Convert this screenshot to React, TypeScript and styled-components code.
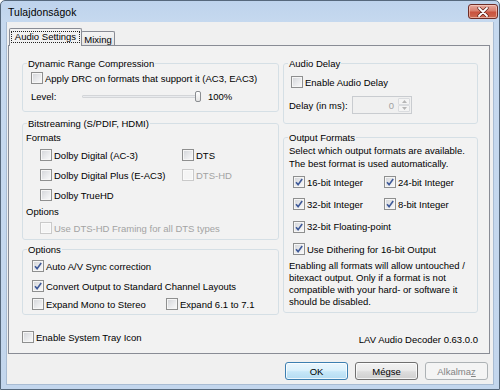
import React from "react";
import styled, { createGlobalStyle } from "styled-components";

const Global = createGlobalStyle`
  html, body { margin: 0; padding: 0; background: #ffffff; }
  body {
    width: 500px; height: 390px; overflow: hidden;
    font-family: "Liberation Sans", Arial, sans-serif;
    font-size: 9.5px; color: #000;
  }
  * { box-sizing: border-box; }
`;

const Window = styled.div`
  width: 500px;
  height: 390px;
  border: 1px solid #56687c;
  border-radius: 5px 5px 0 0;
  background: linear-gradient(#bed3ec 0px, #c6d9ef 22px, #c3d6ed 100%);
  display: flex;
  flex-direction: column;
  overflow: hidden;
`;

const TitleBar = styled.div`
  height: 21px;
  flex: none;
  display: flex;
  align-items: flex-start;
  padding-left: 7px;
`;

const TitleText = styled.div`
  font-size: 10.4px;
  line-height: 12px;
  margin-top: 6px;
  color: #000;
  letter-spacing: 0.1px;
`;

const CloseButton = styled.div`
  margin-left: auto;
  margin-right: 1px;
  margin-top: 3px;
  width: 30px;
  height: 15px;
  border: 1px solid #6e2d27;
  border-radius: 3px;
  background: linear-gradient(#e6a99e 0%, #d8806f 45%, #c9523e 55%, #cd6a52 100%);
  box-shadow: inset 0 0 0 1px rgba(255, 220, 210, 0.55);
  display: flex;
  align-items: center;
  justify-content: center;
`;

const Client = styled.div`
  flex: 1;
  margin: 0 5px 4px 5px;
  background: #f0f0f0;
  border: 1px solid #a9bcd3;
  border-top: none;
  display: flex;
  flex-direction: column;
  padding: 6px 3px 0 1px;
`;

const TabStrip = styled.div`
  display: flex;
  align-items: flex-end;
  height: 17px;
  padding-left: 1px;
  flex: none;
`;

const TabSelected = styled.div`
  width: 73px;
  height: 18px;
  margin-bottom: -1px;
  position: relative;
  z-index: 1;
  border: 1px solid #898c95;
  border-bottom: none;
  border-radius: 2px 2px 0 0;
  background: #f2f2f2;
  padding: 2px 1px 0 1px;
`;

const FocusLabel = styled.div`
  height: 12px;
  border: 1px dotted #222;
  display: flex;
  align-items: center;
  justify-content: center;
  line-height: 10px;
`;

const Tab = styled.div`
  width: 34px;
  height: 14px;
  margin-left: -1px;
  border: 1px solid #898c95;
  border-bottom: none;
  border-radius: 2px 2px 0 0;
  background: linear-gradient(#f4f4f4, #e4e4e4);
  display: flex;
  align-items: center;
  justify-content: center;
  padding-top: 1px;
`;

const Panel = styled.div`
  height: 309px;
  flex: none;
  border: 1px solid #898c95;
  background: #f2f2f2;
  padding: 11px 11px 0 13px;
  display: grid;
  grid-template-columns: 257px 195px;
  column-gap: 4px;
  align-items: start;
`;

const Column = styled.div`
  display: flex;
  flex-direction: column;
`;

const Group = styled.fieldset<{ $mt?: number; $pb?: number }>`
  margin: ${(p) => p.$mt ?? 0}px 0 0 0;
  padding: 0 0 ${(p) => p.$pb ?? 0}px 0;
  border: 1px solid #d5dfe5;
  border-radius: 3px;
  min-width: 0;
`;

const Legend = styled.legend`
  margin-left: 4px;
  padding: 0 1px;
  line-height: 13px;
  height: 13px;
`;

const Row = styled.div<{ $h: number; $indent?: number; $mt?: number; $end?: boolean }>`
  display: flex;
  align-items: center;
  height: ${(p) => p.$h}px;
  padding-left: ${(p) => p.$indent ?? 0}px;
  margin-top: ${(p) => p.$mt ?? 0}px;
  justify-content: ${(p) => (p.$end ? "flex-end" : "flex-start")};
  white-space: nowrap;
`;

const Cell = styled.div<{ $w?: number }>`
  display: flex;
  align-items: center;
  flex: ${(p) => (p.$w ? "none" : "1")};
  width: ${(p) => (p.$w ? `${p.$w}px` : "auto")};
`;

const Para = styled.div<{ $lh: number; $indent: number; $pb?: number }>`
  line-height: ${(p) => p.$lh}px;
  padding-left: ${(p) => p.$indent}px;
  padding-bottom: ${(p) => p.$pb ?? 0}px;
  white-space: nowrap;
`;

const Box = styled.span<{ $disabled?: boolean }>`
  flex: none;
  width: 12px;
  height: 12px;
  border: 1px solid ${(p) => (p.$disabled ? "#cacaca" : "#8e8f8f")};
  background: ${(p) =>
    p.$disabled
      ? "#f5f5f5"
      : "linear-gradient(135deg, #d2d4d8 0%, #e9eaec 55%, #fbfbfb 100%)"};
  box-shadow: inset 0 0 0 1px ${(p) => (p.$disabled ? "#fafafa" : "#f6f6f6")};
  display: flex;
  align-items: center;
  justify-content: center;
`;

const CheckLabel = styled.span<{ $disabled?: boolean }>`
  margin-left: 2px;
  color: ${(p) => (p.$disabled ? "#a3a3a3" : "#000")};
`;

const Text = styled.span<{ $disabled?: boolean; $ml?: number }>`
  color: ${(p) => (p.$disabled ? "#a3a3a3" : "#000")};
  margin-left: ${(p) => p.$ml ?? 0}px;
`;

const Slider = styled.div`
  width: 119px;
  height: 12px;
  display: flex;
  align-items: center;
  flex: none;
`;

const Track = styled.div`
  flex: 1;
  height: 3px;
  border: 1px solid #d3d5d8;
  border-radius: 1px;
  background: #e9ebee;
`;

const Thumb = styled.div`
  width: 6px;
  height: 11px;
  margin-left: -2px;
  border: 1px solid #8a8d91;
  border-radius: 2px;
  background: linear-gradient(#ffffff, #e4e4e4);
`;

const SpinBox = styled.div`
  width: 60px;
  height: 18px;
  border: 1px solid #c9ccd0;
  background: #f0f0f0;
  display: flex;
  flex: none;
`;

const SpinValue = styled.div`
  flex: 1;
  display: flex;
  align-items: center;
  justify-content: flex-end;
  padding-right: 4px;
  color: #a0a0a0;
`;

const SpinButtons = styled.div`
  width: 13px;
  display: flex;
  flex-direction: column;
  padding: 1px 1px 1px 0;
`;

const SpinHalf = styled.div`
  flex: 1;
  border: 1px solid #dadcdf;
  border-radius: 1px;
  background: #f4f4f4;
  display: flex;
  align-items: center;
  justify-content: center;
`;

const ButtonRow = styled.div`
  display: flex;
  justify-content: flex-end;
  gap: 7px;
  margin-top: 8px;
  padding-right: 2px;
`;

const Button = styled.div<{ $variant: "default" | "normal" | "disabled" }>`
  width: 63px;
  height: 18px;
  border-radius: 3px;
  display: flex;
  align-items: center;
  justify-content: center;
  border: 1px solid
    ${(p) =>
      p.$variant === "default" ? "#3c7fb1" : p.$variant === "normal" ? "#707070" : "#adb2b5"};
  color: ${(p) => (p.$variant === "disabled" ? "#838383" : "#000")};
  background: ${(p) =>
    p.$variant === "default"
      ? "linear-gradient(#eaf6fd 0%, #dcf1fc 45%, #c6e7f8 55%, #b4dcf2 100%)"
      : p.$variant === "normal"
      ? "linear-gradient(#f2f2f2 0%, #ebebeb 45%, #dddddd 55%, #cfcfcf 100%)"
      : "#f4f4f4"};
  box-shadow: inset 0 0 0 1px
    ${(p) => (p.$variant === "disabled" ? "#f4f4f4" : "rgba(255,255,255,0.75)")};
`;

const Mnemonic = styled.span`
  text-decoration: underline;
`;

function CheckMark() {
  return (
    <svg width="8" height="8" viewBox="0 0 8 8">
      <path d="M1 4.2 L3.1 6.6 L7.2 1" fill="none" stroke="#3f5a99" strokeWidth="1.6" />
    </svg>
  );
}

function Check({
  label,
  checked,
  disabled,
}: {
  label: string;
  checked?: boolean;
  disabled?: boolean;
}) {
  return (
    <>
      <Box $disabled={disabled}>{checked ? <CheckMark /> : null}</Box>
      <CheckLabel $disabled={disabled}>{label}</CheckLabel>
    </>
  );
}

function Arrow({ up }: { up?: boolean }) {
  return (
    <svg width="5" height="3" viewBox="0 0 5 3">
      <path d={up ? "M0 3 L2.5 0 L5 3 Z" : "M0 0 L2.5 3 L5 0 Z"} fill="#b5b5b5" />
    </svg>
  );
}

export default function App() {
  return (
    <>
      <Global />
      <Window>
        <TitleBar>
          <TitleText>Tulajdonságok</TitleText>
          <CloseButton>
            <svg width="12" height="10" viewBox="0 0 12 10">
              <path d="M2 1 L10 9 M10 1 L2 9" stroke="#5a1e18" strokeWidth="3.2" strokeLinecap="round" />
              <path d="M2 1 L10 9 M10 1 L2 9" stroke="#ffffff" strokeWidth="1.8" strokeLinecap="round" />
            </svg>
          </CloseButton>
        </TitleBar>
        <Client>
          <TabStrip>
            <TabSelected>
              <FocusLabel>Audio Settings</FocusLabel>
            </TabSelected>
            <Tab>Mixing</Tab>
          </TabStrip>
          <Panel>
            <Column>
              <Group $pb={5}>
                <Legend>Dynamic Range Compression</Legend>
                <Row $h={16} $indent={8}>
                  <Check label="Apply DRC on formats that support it (AC3, EAC3)" />
                </Row>
                <Row $h={20} $indent={8}>
                  <Cell $w={51}>
                    <Text>Level:</Text>
                  </Cell>
                  <Slider>
                    <Track />
                    <Thumb />
                  </Slider>
                  <Cell>
                    <Text $ml={7}>100%</Text>
                  </Cell>
                </Row>
              </Group>

              <Group $mt={5}>
                <Legend>Bitstreaming (S/PDIF, HDMI)</Legend>
                <Row $h={15} $indent={3}>
                  <Text>Formats</Text>
                </Row>
                <Row $h={20} $indent={17}>
                  <Cell $w={142}>
                    <Check label="Dolby Digital (AC-3)" />
                  </Cell>
                  <Cell>
                    <Check label="DTS" />
                  </Cell>
                </Row>
                <Row $h={20} $indent={17}>
                  <Cell $w={142}>
                    <Check label="Dolby Digital Plus (E-AC3)" />
                  </Cell>
                  <Cell>
                    <Check label="DTS-HD" disabled />
                  </Cell>
                </Row>
                <Row $h={20} $indent={17}>
                  <Check label="Dolby TrueHD" />
                </Row>
                <Row $h={12} $indent={3}>
                  <Text>Options</Text>
                </Row>
                <Row $h={22} $indent={17}>
                  <Check label="Use DTS-HD Framing for all DTS types" disabled />
                </Row>
              </Group>

              <Group $mt={3} $pb={2}>
                <Legend>Options</Legend>
                <Row $h={20} $indent={9}>
                  <Check label="Auto A/V Sync correction" checked />
                </Row>
                <Row $h={20} $indent={9}>
                  <Check label="Convert Output to Standard Channel Layouts" checked />
                </Row>
                <Row $h={16} $indent={9}>
                  <Cell $w={134}>
                    <Check label="Expand Mono to Stereo" />
                  </Cell>
                  <Cell>
                    <Check label="Expand 6.1 to 7.1" />
                  </Cell>
                </Row>
              </Group>

              <Row $h={20} $mt={12}>
                <Check label="Enable System Tray Icon" />
              </Row>
            </Column>

            <Column>
              <Group $pb={7}>
                <Legend>Audio Delay</Legend>
                <Row $h={24} $indent={7}>
                  <Check label="Enable Audio Delay" />
                </Row>
                <Row $h={22} $indent={5}>
                  <Cell $w={63}>
                    <Text>Delay (in ms):</Text>
                  </Cell>
                  <SpinBox>
                    <SpinValue>0</SpinValue>
                    <SpinButtons>
                      <SpinHalf>
                        <Arrow up />
                      </SpinHalf>
                      <SpinHalf>
                        <Arrow />
                      </SpinHalf>
                    </SpinButtons>
                  </SpinBox>
                </Row>
              </Group>

              <Group $mt={7} $pb={4}>
                <Legend>Output Formats</Legend>
                <Para $lh={13} $indent={5} $pb={1}>
                  Select which output formats are available.
                  <br />
                  The best format is used automatically.
                </Para>
                <Row $h={22} $indent={9}>
                  <Cell $w={91}>
                    <Check label="16-bit Integer" checked />
                  </Cell>
                  <Cell>
                    <Check label="24-bit Integer" checked />
                  </Cell>
                </Row>
                <Row $h={22} $indent={9}>
                  <Cell $w={91}>
                    <Check label="32-bit Integer" checked />
                  </Cell>
                  <Cell>
                    <Check label="8-bit Integer" checked />
                  </Cell>
                </Row>
                <Row $h={23} $indent={9}>
                  <Check label="32-bit Floating-point" checked />
                </Row>
                <Row $h={22} $indent={9}>
                  <Check label="Use Dithering for 16-bit Output" checked />
                </Row>
                <Para $lh={12} $indent={5}>
                  Enabling all formats will allow untouched /
                  <br />
                  bitexact output. Only if a format is not
                  <br />
                  compatible with your hard- or software it
                  <br />
                  should be disabled.
                </Para>
              </Group>

              <Row $h={20} $mt={16} $end>
                <Text>LAV Audio Decoder 0.63.0.0</Text>
              </Row>
            </Column>
          </Panel>
          <ButtonRow>
            <Button $variant="default">OK</Button>
            <Button $variant="normal">Mégse</Button>
            <Button $variant="disabled">
              Alkalma<Mnemonic>z</Mnemonic>
            </Button>
          </ButtonRow>
        </Client>
      </Window>
    </>
  );
}
